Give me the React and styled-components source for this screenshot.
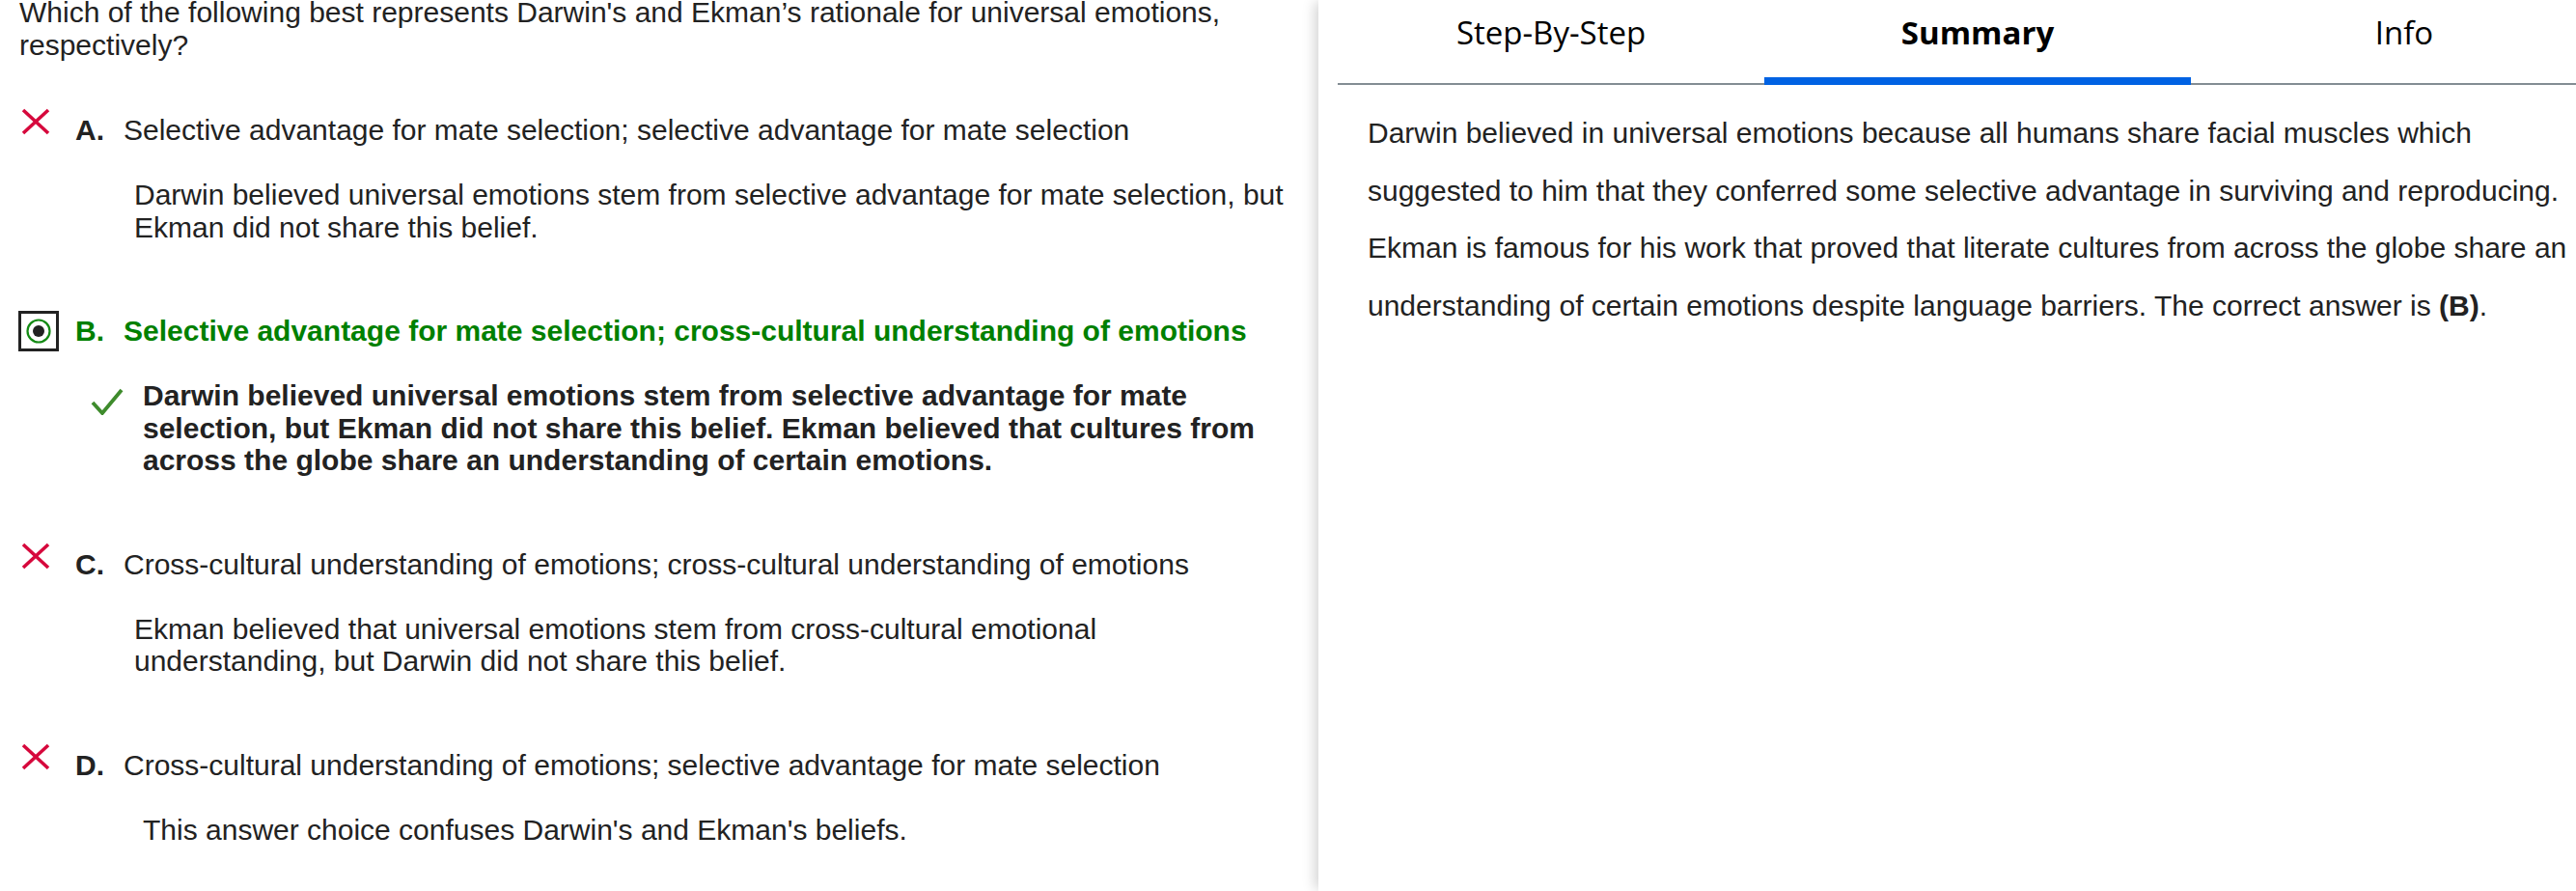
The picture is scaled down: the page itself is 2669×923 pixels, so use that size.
import React from "react";
import styled, { createGlobalStyle } from "styled-components";

const GlobalStyle = createGlobalStyle`
  html, body { margin: 0; padding: 0; background: #fff; overflow: hidden; }
  body { font-family: "Liberation Sans", Arial, sans-serif; color: #222; }
`;

const Page = styled.div`
  display: flex;
  width: 2732px;
  height: 923px;
  background: #fff;
`;

const LeftPanel = styled.section`
  box-sizing: border-box;
  width: 1366px;
  flex: none;
  padding: 0 30px 0 19px;
  font-size: 30px;
`;

const RightPanel = styled.section`
  box-sizing: border-box;
  width: 1366px;
  flex: none;
  padding: 0 20px;
  background: #fff;
  box-shadow: -6px 0 12px -2px rgba(0, 0, 0, 0.17);
`;

const Question = styled.p`
  margin: -4px 0 0 1px;
  line-height: 34px;
`;

const ChoiceList = styled.div`
  display: flex;
  flex-direction: column;
  gap: 74px;
  margin-top: 54px;
`;

const Choice = styled.div`
  display: flex;
  flex-direction: column;
`;

const TitleRow = styled.div`
  display: flex;
  align-items: flex-start;
  line-height: 33.5px;
  color: ${(p) => (p.$correct ? "#008000" : "#222")};
  font-weight: ${(p) => (p.$correct ? 700 : 400)};
`;

const IconSlot = styled.div`
  flex: none;
  width: 42px;
  margin-right: 17px;
  display: flex;
`;

const XMark = styled.svg`
  width: 30px;
  height: 28px;
  margin: -6px 0 0 3px;
`;

const RadioBox = styled.div`
  box-sizing: border-box;
  width: 42px;
  height: 42px;
  margin: -4px 0 -5px 0;
  border: 3px solid #222;
  display: flex;
  align-items: center;
  justify-content: center;
`;

const Label = styled.span`
  flex: none;
  width: 50px;
  font-weight: 700;
`;

const TitleText = styled.span``;

const Explanation = styled.div`
  display: flex;
  align-items: flex-start;
  margin-top: 33.5px;
  padding-left: ${(p) => p.$indent}px;
  line-height: 33.5px;
  font-weight: ${(p) => (p.$bold ? 700 : 400)};
`;

const CheckMark = styled.svg`
  flex: none;
  width: 34px;
  height: 28px;
  margin: 9px 20px 0 0;
`;

const TabBar = styled.nav`
  display: flex;
  width: 1326px;
  height: 88px;
  box-sizing: border-box;
  border-bottom: 2px solid #838d93;
`;

const Tab = styled.div`
  box-sizing: border-box;
  width: 442px;
  height: 88px;
  margin-bottom: -2px;
  padding-top: 14px;
  text-align: center;
  font-family: "Open Sans", sans-serif;
  font-size: 33px;
  line-height: 40px;
  color: #000;
  font-weight: ${(p) => (p.$active ? 700 : 400)};
  border-bottom: 8px solid ${(p) => (p.$active ? "#0062e3" : "transparent")};
`;

const Summary = styled.p`
  margin: 20px 0 0 0;
  padding: 0 31px;
  font-size: 30px;
  line-height: 59.7px;
  color: #222;
`;

function Cross() {
  return (
    <XMark viewBox="0 0 30 28">
      <path d="M2 2 L28 26 M28 2 L2 26" stroke="#d6083c" strokeWidth="3.6" fill="none" />
    </XMark>
  );
}

function Radio() {
  return (
    <RadioBox>
      <svg width="28" height="28" viewBox="0 0 28 28">
        <circle cx="14" cy="14" r="11.5" stroke="#138a13" strokeWidth="2.2" fill="#fff" />
        <circle cx="14" cy="14" r="6" fill="#222" />
      </svg>
    </RadioBox>
  );
}

function Check() {
  return (
    <CheckMark viewBox="0 0 34 28">
      <path d="M2 15 L12 26 L32 2" stroke="#3e8b2c" strokeWidth="3.8" fill="none" />
    </CheckMark>
  );
}

const choices = [
  {
    label: "A.",
    text: "Selective advantage for mate selection; selective advantage for mate selection",
    expl: "Darwin believed universal emotions stem from selective advantage for mate selection, but Ekman did not share this belief.",
    indent: 120,
  },
  {
    label: "B.",
    text: "Selective advantage for mate selection; cross-cultural understanding of emotions",
    expl: "Darwin believed universal emotions stem from selective advantage for mate selection, but Ekman did not share this belief. Ekman believed that cultures from across the globe share an understanding of certain emotions.",
    correct: true,
    indent: 75,
  },
  {
    label: "C.",
    text: "Cross-cultural understanding of emotions; cross-cultural understanding of emotions",
    expl: "Ekman believed that universal emotions stem from cross-cultural emotional understanding, but Darwin did not share this belief.",
    indent: 120,
  },
  {
    label: "D.",
    text: "Cross-cultural understanding of emotions; selective advantage for mate selection",
    expl: "This answer choice confuses Darwin's and Ekman's beliefs.",
    indent: 129,
  },
];

export default function App() {
  return (
    <>
      <GlobalStyle />
      <Page>
        <LeftPanel>
          <Question>
            Which of the following best represents Darwin's and Ekman’s rationale for universal emotions, respectively?
          </Question>
          <ChoiceList>
            {choices.map((c) => (
              <Choice key={c.label}>
                <TitleRow $correct={c.correct}>
                  <IconSlot>{c.correct ? <Radio /> : <Cross />}</IconSlot>
                  <Label>{c.label}</Label>
                  <TitleText>{c.text}</TitleText>
                </TitleRow>
                <Explanation $indent={c.indent} $bold={c.correct}>
                  {c.correct && <Check />}
                  <span>{c.expl}</span>
                </Explanation>
              </Choice>
            ))}
          </ChoiceList>
        </LeftPanel>
        <RightPanel>
          <TabBar>
            <Tab>Step-By-Step</Tab>
            <Tab $active>Summary</Tab>
            <Tab>Info</Tab>
          </TabBar>
          <Summary>
            Darwin believed in universal emotions because all humans share facial muscles which suggested to him that they conferred some selective advantage in surviving and reproducing. Ekman is famous for his work that proved that literate cultures from across the globe share an understanding of certain emotions despite language barriers. The correct answer is <b>(B)</b>.
          </Summary>
        </RightPanel>
      </Page>
    </>
  );
}
